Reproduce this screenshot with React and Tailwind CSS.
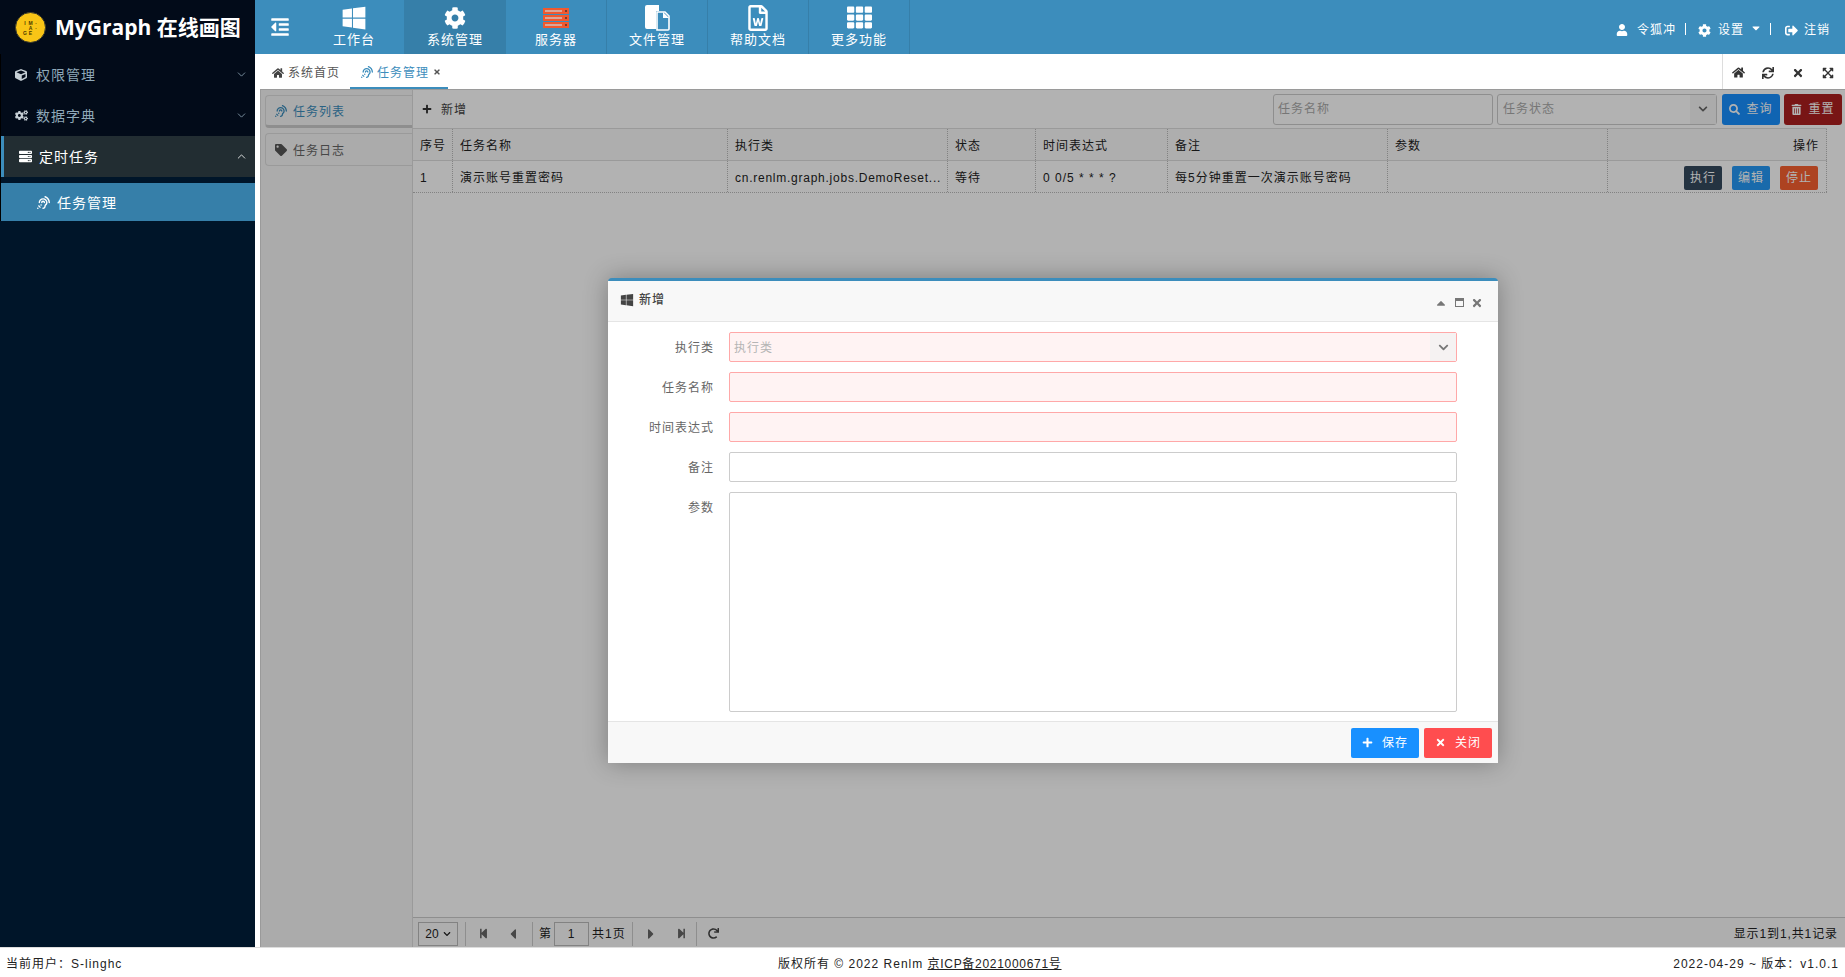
import React from "react";
import {
  FaWindows, FaCog, FaRegFileWord, FaTh, FaOutdent, FaUser, FaSignOutAlt, FaServer,
  FaCube, FaCogs, FaAssistiveListeningSystems, FaHome, FaSync, FaTimes,
  FaExpandArrowsAlt, FaPlus, FaSearch, FaTrashAlt, FaTag, FaCaretDown, FaCaretUp, FaStepBackward,
  FaStepForward, FaCaretLeft, FaCaretRight, FaRedo, FaChevronDown,
} from "react-icons/fa";
import { ChevronDown, ChevronUp } from "lucide-react";

const FONT = "font-['Liberation_Sans','Noto_Sans_CJK_SC',sans-serif] tracking-[1px]";

function ServerIcon() {
  return (
    <svg width="26" height="20" viewBox="0 0 26 20">
      {[0, 7, 14].map((y) => (
        <g key={y}>
          <rect x="0" y={y} width="26" height="6" fill="#f0592f" />
          <rect x="2" y={y + 2} width="17" height="2" fill="#d9a79a" />
          <rect x="22" y={y + 2} width="2" height="2" fill="#7a3a2a" />
        </g>
      ))}
    </svg>
  );
}

function FilesIcon() {
  return (
    <svg width="25" height="26" viewBox="0 0 25 26">
      <path d="M2 0h12v6h-3v18H2a2 2 0 0 1-2-2V2a2 2 0 0 1 2-2z" fill="#fff" />
      <path d="M12 7h8l4 4v13a1 1 0 0 1-1 1H12z" fill="none" stroke="#fff" strokeWidth="1.6" />
      <path d="M18 7v6h6z" fill="#fff" />
    </svg>
  );
}

const navItems = [
  { label: "工作台", icon: <FaWindows className="text-[26px]" /> },
  { label: "系统管理", icon: <FaCog className="text-[22px]" />, active: true },
  { label: "服务器", icon: <ServerIcon /> },
  { label: "文件管理", icon: <FilesIcon /> },
  { label: "帮助文档", icon: <FaRegFileWord className="text-[26px]" /> },
  { label: "更多功能", icon: <FaTh className="text-[25px]" /> },
];

const cols = [
  ["序号", "w-[40px]", "1"],
  ["任务名称", "w-[275px]", "演示账号重置密码"],
  ["执行类", "w-[220px]", <span className="tracking-[0.75px]">cn.renlm.graph.jobs.DemoReset...</span>],
  ["状态", "w-[88px]", "等待"],
  ["时间表达式", "w-[132px]", "0 0/5 * * * ?"],
  ["备注", "w-[220px]", "每5分钟重置一次演示账号密码"],
  ["参数", "w-[220px]", ""],
];

function Sidebar() {
  return (
    <aside className="w-[255px] shrink-0 flex flex-col bg-[#001529] text-[#b8c7ce]">
      <div className="h-[54px] shrink-0 bg-[#020b19] flex items-center pl-[15px] gap-[9px]">
        <div className="w-[31px] h-[31px] rounded-full bg-[#f9c516] border border-[#3a3a2a] grid grid-cols-3 place-items-center px-[6px] py-[8px] text-[5px] leading-none tracking-normal text-[#4a3a00] font-bold">
          <span>I</span><span>M</span><span>·</span>
          <span></span><span>A</span><span>·</span>
          <span>G</span><span>E</span><span></span>
        </div>
        <span className="text-[21px] font-['Open_Sans','Noto_Sans_CJK_SC',sans-serif] font-bold text-white tracking-normal whitespace-nowrap pt-[1px]">MyGraph 在线画图</span>
      </div>
      <div className="flex flex-col border-l border-black">
        <div className="h-[41px] flex items-center pl-[14px] pr-[7px] bg-[#020b19] text-[14px] text-[#8fa8b8]">
          <FaCube className="text-[12px] mr-[9px] text-[#c7d0d6]" />
          <span className="flex-1 pt-[1px]">权限管理</span>
          <ChevronDown size={13} strokeWidth={1.5} />
        </div>
        <div className="h-[41px] flex items-center pl-[14px] pr-[7px] bg-[#020b19] text-[14px] text-[#8fa8b8]">
          <FaCogs className="text-[13px] mr-[8px] text-[#c7d0d6]" />
          <span className="flex-1 pt-[1px]">数据字典</span>
          <ChevronDown size={13} strokeWidth={1.5} />
        </div>
        <div className="h-[41px] flex items-center pl-[15px] pr-[7px] bg-[#222d32] border-l-[3px] border-[#3c8dbc] text-[14px] text-white">
          <FaServer className="text-[13px] mr-[7px]" />
          <span className="flex-1 pt-[1px]">定时任务</span>
          <ChevronUp size={13} strokeWidth={1.5} />
        </div>
        <div className="h-[6px]" />
        <div className="h-[38px] flex items-center pl-[36px] bg-[#367fa9] text-[14px] text-white">
          <FaAssistiveListeningSystems className="text-[13px] mr-[7px]" />
          <span className="pt-[3px]">任务管理</span>
        </div>
      </div>
    </aside>
  );
}

function TopNav() {
  return (
    <header className="h-[54px] shrink-0 bg-[#3c8dbc] flex items-stretch text-white">
      <div className="w-[49px] flex items-center justify-center">
        <FaOutdent className="text-[20px]" />
      </div>
      {navItems.map((n) => (
        <div key={n.label} className={`w-[101px] flex flex-col items-center justify-start pt-[4px] border-r border-[#367fa9] text-[13px] ${n.active ? "bg-[#367fa9]" : ""}`}>
          <div className="h-[27px] flex items-center">{n.icon}</div>
          <span className="leading-[18px]">{n.label}</span>
        </div>
      ))}
      <div className="flex-1 flex items-center justify-end pr-[15px] pt-[6px] text-[12px]">
        <FaUser className="text-[12px] mr-[9px]" />
        <span>令狐冲</span>
        <span className="w-px h-[12px] bg-white ml-[9px] mr-[12px] mb-[2px]" />
        <FaCog className="text-[13px] mr-[7px]" />
        <span>设置</span>
        <FaCaretDown className="text-[12px] ml-[6px] mr-[6px] mb-[4px]" />
        <span className="w-px h-[12px] bg-white mx-[2px] mb-[2px]" />
        <FaSignOutAlt className="text-[13px] ml-[12px] mr-[6px]" />
        <span>注销</span>
      </div>
    </header>
  );
}

function Tabs() {
  return (
    <div className="h-[35px] shrink-0 bg-white flex items-stretch text-[12px] pl-[5px]">
      <div className="w-[90px] flex items-center pl-[12px] text-[#555]">
        <FaHome className="text-[12px] mr-[4px] mt-[2px] text-[#444]" />
        <span className="pt-[3px]">系统首页</span>
      </div>
      <div className="w-[98px] flex items-center pl-[11px] text-[#3c8dbc] border-b-[2px] border-[#3c8dbc]">
        <FaAssistiveListeningSystems className="text-[12px] mr-[4px] mt-[2px]" />
        <span className="pt-[4px]">任务管理</span>
        <FaTimes className="text-[8px] ml-[4px] mt-[3px] text-[#555]" />
      </div>
      <div className="flex-1" />
      <div className="w-[123px] border-l border-[#ddd] flex items-center text-[#333] pt-[2px]">
        <span className="w-[30px] flex justify-center"><FaHome className="text-[13px]" /></span>
        <span className="w-[30px] flex justify-center"><FaSync className="text-[12px]" /></span>
        <span className="w-[30px] flex justify-center"><FaTimes className="text-[12px]" /></span>
        <span className="w-[30px] flex justify-center"><FaExpandArrowsAlt className="text-[12px]" /></span>
      </div>
    </div>
  );
}

function Btn({ bg, children, w }) {
  return (
    <div className={`h-[24px] ${w} rounded-[2px] flex items-center justify-center text-white text-[12px] ${bg}`}>{children}</div>
  );
}

function Content() {
  return (
    <div className="flex-1 flex min-h-0 border-t border-[#ddd]">
      <div className="w-[152px] shrink-0 bg-[#f5f5f5] border-l border-[#ddd] pt-[5px] pl-[4px] flex flex-col gap-[5px] text-[12px]">
        <div className="h-[33px] bg-[#f5f5f5] border border-[#ddd] border-b-[3px] border-b-[#ccc] border-r-0 rounded-l-[4px] flex items-center pl-[9px] text-[#3c8dbc]">
          <FaAssistiveListeningSystems className="text-[12px] mr-[6px]" /><span className="pt-[2px]">任务列表</span>
        </div>
        <div className="h-[33px] border border-[#ddd] border-r-0 rounded-l-[4px] flex items-center pl-[9px] text-[#666]">
          <FaTag className="text-[12px] mr-[6px] text-[#555]" /><span className="pt-[2px]">任务日志</span>
        </div>
      </div>
      <div className="flex-1 flex flex-col bg-white border-l border-[#ddd] min-w-0">
        <div className="h-[38px] shrink-0 flex items-center pl-[9px] pr-[3px] text-[12px]">
          <FaPlus className="text-[10px] text-[#333] mr-[9px]" />
          <span className="text-[#444] pt-[1px]">新增</span>
          <div className="flex-1" />
          <div className="w-[220px] h-[31px] border border-[#ccc] rounded-[3px] flex items-center pl-[4px] text-[#aaa]">任务名称</div>
          <div className="w-[220px] h-[31px] ml-[4px] border border-[#ccc] rounded-[3px] flex items-center pl-[5px] text-[#aaa] relative">
            <span className="flex-1">任务状态</span>
            <span className="w-[26px] h-full bg-[#f5f5f5] flex items-center justify-center text-[#666]"><FaChevronDown className="text-[10px]" /></span>
          </div>
          <div className="w-[58px] h-[31px] ml-[5px] rounded-[3px] bg-[#1890ff] text-white flex items-center justify-center"><FaSearch className="text-[11px] mr-[6px]" />查询</div>
          <div className="w-[58px] h-[31px] ml-[4px] rounded-[3px] bg-[#ad1f1f] text-white flex items-center justify-center"><FaTrashAlt className="text-[11px] mr-[6px]" />重置</div>
        </div>
        <div className="flex-1 min-h-0 text-[12px] text-[#222]">
          <div className="h-[33px] flex border-y border-[#ddd] bg-[#fafafa] mr-[18px]">
            {cols.map(([h, w]) => (
              <div key={h} className={`${w} shrink-0 border-r border-dotted border-[#bbb] flex items-center pl-[7px] pt-[3px]`}>{h}</div>
            ))}
            <div className="flex-1 border-r border-dotted border-[#bbb] flex items-center justify-end pr-[7px] pt-[3px]">操作</div>
          </div>
          <div className="h-[32px] flex border-b border-dotted border-[#bbb] mr-[18px]">
            {cols.map(([h, w, v]) => (
              <div key={h} className={`${w} shrink-0 border-r border-dotted border-[#bbb] flex items-center pl-[7px] pt-[3px] whitespace-nowrap overflow-hidden`}>{v}</div>
            ))}
            <div className="flex-1 border-r border-dotted border-[#bbb] flex items-center justify-end pr-[8px] pt-[3px] gap-[10px]">
              <Btn bg="bg-[#34495e]" w="w-[38px]">执行</Btn>
              <Btn bg="bg-[#2599f5]" w="w-[38px]">编辑</Btn>
              <Btn bg="bg-[#f86030]" w="w-[38px]">停止</Btn>
            </div>
          </div>
        </div>
        <div className="h-[30px] shrink-0 border-t border-[#ccc] bg-[#fafafa] flex items-center pl-[5px] pr-[7px] pt-[2px] text-[12px] text-[#222]">
          <div className="w-[40px] h-[24px] border border-[#bbb] flex items-center justify-center gap-[4px] tracking-normal">20<FaChevronDown className="text-[8px]" /></div>
          <span className="w-px h-[24px] bg-[#ccc] ml-[7px] mr-[12px]" />
          <FaStepBackward className="text-[11px] text-[#666]" />
          <FaCaretLeft className="text-[16px] text-[#666] ml-[16px]" />
          <span className="w-px h-[24px] bg-[#ccc] ml-[11px] mr-[6px]" />
          <span>第</span>
          <div className="w-[35px] h-[24px] ml-[2px] mr-[3px] border border-[#bbb] flex items-center justify-center">1</div>
          <span>共1页</span>
          <span className="w-px h-[24px] bg-[#ccc] ml-[6px] mr-[10px]" />
          <FaCaretRight className="text-[16px] text-[#666]" />
          <FaStepForward className="text-[11px] text-[#666] ml-[17px]" />
          <span className="w-px h-[24px] bg-[#ccc] ml-[9px] mr-[11px]" />
          <FaRedo className="text-[11px] text-[#444]" />
          <div className="flex-1" />
          <span className="tracking-[0.9px]">显示1到1,共1记录</span>
        </div>
      </div>
    </div>
  );
}

function Field({ label, invalid, children, h = "h-[30px]" }) {
  return (
    <div className="flex items-start">
      <div className="w-[106px] h-[30px] shrink-0 flex items-center justify-end pt-[1px] text-[12px] text-[#666]">{label}</div>
      <div className={`ml-[15px] w-[728px] ${h} rounded-[2px] border flex items-center ${invalid ? "border-[#ffa8a8] bg-[#fff3f3]" : "border-[#ccc] bg-white"}`}>
        {children}
      </div>
    </div>
  );
}

function Modal() {
  return (
    <div className="absolute left-[348px] top-[189px] w-[890px] h-[485px] bg-white rounded-t-[4px] border-t-[3px] border-[#3c8dbc] shadow-[0_0_25px_rgba(0,0,0,0.3)] flex flex-col">
      <div className="h-[41px] shrink-0 bg-[#f8f8f8] border-b border-[#e5e5e5] flex items-center pl-[12px] pr-[15px] text-[12px] text-[#444]">
        <FaWindows className="text-[14px] mr-[5px] mb-[2px]" />
        <span className="flex-1 mb-[2px] font-medium">新增</span>
        <div className="flex items-center gap-[7px] text-[#777] mt-[3px]">
          <FaCaretUp className="text-[14px]" />
          <span className="w-[9px] h-[9px] border border-[#777] border-t-[3px]" />
          <FaTimes className="text-[12px]" />
        </div>
      </div>
      <div className="flex-1 flex flex-col gap-[10px] pt-[10px]">
        <Field label="执行类" invalid>
          <span className="flex-1 pl-[4px] pt-[1px] text-[12px] text-[#b5b5b5]">执行类</span>
          <span className="w-[26px] h-full bg-[#f5f2f2] flex items-center justify-center text-[#777]"><FaChevronDown className="text-[11px]" /></span>
        </Field>
        <Field label="任务名称" invalid />
        <Field label="时间表达式" invalid />
        <Field label="备注" />
        <Field label="参数" h="h-[220px]" />
      </div>
      <div className="h-[42px] shrink-0 border-t border-[#e5e5e5] bg-[#f8f8f8] flex items-center justify-end pr-[6px] gap-[5px] text-[12px] text-white">
        <div className="w-[68px] h-[30px] rounded-[2px] bg-[#1890ff] flex items-center justify-center"><FaPlus className="text-[11px] mr-[9px]" />保存</div>
        <div className="w-[68px] h-[30px] rounded-[2px] bg-[#ff4d4f] flex items-center justify-center"><FaTimes className="text-[11px] mr-[9px]" />关闭</div>
      </div>
    </div>
  );
}

export default function App() {
  return (
    <div className={`h-[977px] w-full flex flex-col overflow-hidden bg-white ${FONT}`}>
      <div className="flex-1 flex min-h-0">
        <Sidebar />
        <div className="flex-1 flex flex-col min-w-0">
          <TopNav />
          <Tabs />
          <div className="flex-1 flex flex-col min-h-0 ml-[5px] relative">
            <Content />
            <div className="absolute inset-0 bg-black/30">
              <Modal />
            </div>
          </div>
        </div>
      </div>
      <footer className="h-[30px] shrink-0 bg-white border-t border-[#ddd] flex items-center justify-between pl-[6px] pr-[6px] pt-[2px] text-[12px] text-[#222] relative">
        <span>当前用户：S-linghc</span>
        <span className="absolute left-[778px]">版权所有 © 2022 Renlm <span className="underline tracking-[0.7px]">京ICP备2021000671号</span></span>
        <span>2022-04-29 ~ 版本：v1.0.1</span>
      </footer>
    </div>
  );
}
